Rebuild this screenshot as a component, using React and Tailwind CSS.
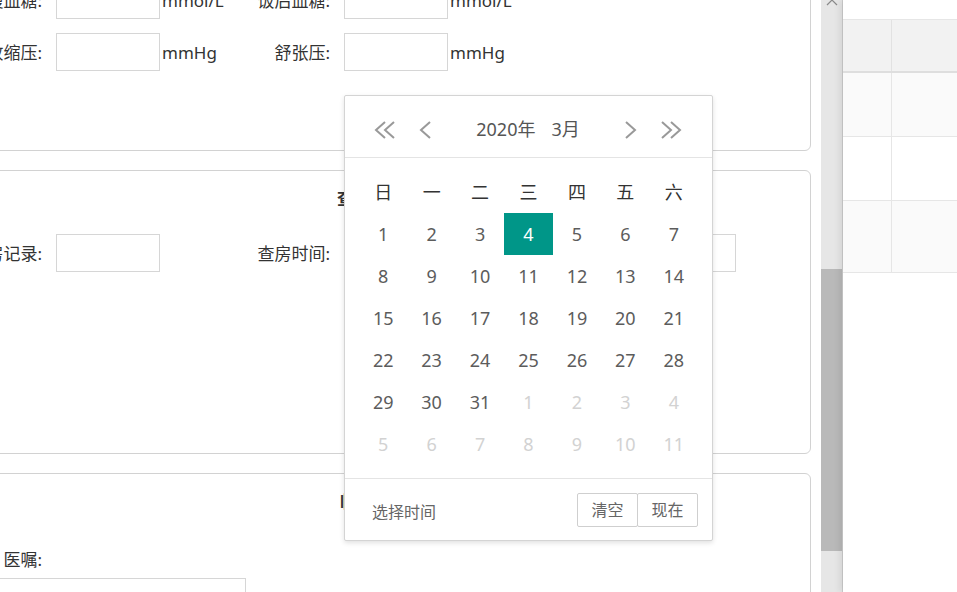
import React from 'react'

const font = { fontFamily: '"Noto Sans", "Noto Sans CJK SC", sans-serif' }

function Chevron({ dir = 'left', double = false }) {
  const w = double ? 22 : 12
  const pts = dir === 'left' ? ['11,1 2,9 11,17', '20,1 11,9 20,17'] : ['1,1 10,9 1,17', '10,1 19,9 10,17']
  const list = double ? pts : [dir === 'left' ? '11,1 2,9 11,17' : '1,1 10,9 1,17']
  return (
    <svg width={w} height="18" viewBox={`0 0 ${w} 18`} fill="none" stroke="#999" strokeWidth="2">
      {list.map(p => <polyline key={p} points={p} />)}
    </svg>
  )
}

function Field({ label, unit, wide }) {
  return (
    <div className="flex items-center">
      <label className="w-[145px] shrink-0 pr-[14px] pt-[2px] text-right text-[17px] text-[#333]">{label}</label>
      <div className={`h-[38px] shrink-0 border border-[#d6d6d6] bg-white ${wide ? 'w-[392px]' : 'w-[104px]'}`} />
      {unit && <span className="ml-[2px] pt-[2px] text-[17px] text-[#333]">{unit}</span>}
    </div>
  )
}

function Calendar() {
  const weeks = ['日', '一', '二', '三', '四', '五', '六']
  const days = []
  for (let i = 1; i <= 31; i++) days.push({ d: i, cur: true })
  for (let i = 1; i <= 11; i++) days.push({ d: i, cur: false })
  return (
    <div className="absolute left-[344px] top-[95px] w-[369px] rounded-[2px] border border-[#d4d4d4] bg-white shadow-[0_2px_5px_rgba(0,0,0,0.12)]" style={font}>
      <div className="flex h-[62px] items-center border-b border-[#e4e4e4] px-[29px] pt-[6px]">
        <div className="flex items-center gap-[23px]">
          <Chevron dir="left" double />
          <Chevron dir="left" />
        </div>
        <div className="flex flex-1 justify-center gap-[16px] text-[18px] text-[#555]">
          <span>2020年</span>
          <span>3月</span>
        </div>
        <div className="flex items-center gap-[24px]">
          <Chevron dir="right" />
          <Chevron dir="right" double />
        </div>
      </div>
      <div className="px-[14px] py-[13px]">
        <div className="grid grid-cols-7">
          {weeks.map(w => (
            <div key={w} className="flex h-[42px] items-center justify-center text-[18px] text-[#333]">{w}</div>
          ))}
          {days.map((x, i) => (
            <div
              key={i}
              className={`flex h-[42px] items-center justify-center text-[18px] ${
                x.cur && x.d === 4 ? 'bg-[#009688] text-white' : x.cur ? 'text-[#5c5c5c]' : 'text-[#d2d2d2]'
              }`}
            >
              {x.d}
            </div>
          ))}
        </div>
      </div>
      <div className="flex h-[62px] items-center border-t border-[#e4e4e4] pl-[27px] pr-[14px]">
        <span className="flex-1 pt-[4px] text-[16px] text-[#666]">选择时间</span>
        <button className="h-[34px] w-[61px] rounded-[2px] border border-[#cfcfcf] text-[16px] text-[#666]">清空</button>
        <button className="h-[34px] w-[61px] -ml-px rounded-[2px] border border-[#cfcfcf] text-[16px] text-[#666]">现在</button>
      </div>
    </div>
  )
}

export default function App() {
  return (
    <div className="relative flex h-[592px] w-[957px] overflow-hidden bg-white" style={font}>
      <div className="w-[821px] shrink-0 overflow-hidden">
        <div className="-ml-[90px] -mt-[100px] mr-[10px] flex flex-col gap-[19px]">
          <div className="h-[251px] rounded-[6px] border border-[#d2d2d2] pt-[80px]">
            <div className="grid grid-cols-[288px_288px_1fr] gap-y-[14px]">
              <Field label="空腹血糖:" unit="mmol/L" />
              <Field label="饭后血糖:" unit="mmol/L" />
              <div />
              <Field label="收缩压:" unit="mmHg" />
              <Field label="舒张压:" unit="mmHg" />
              <div />
            </div>
          </div>

          <div className="h-[284px] rounded-[6px] border border-[#d2d2d2] pt-[16px]">
            <div className="pl-[21px] text-center text-[17px] font-bold leading-[24px] text-[#333]">查房记录</div>
            <div className="mt-[23px] grid grid-cols-[288px_1fr]">
              <Field label="查房记录:" />
              <Field label="查房时间:" wide />
            </div>
          </div>

          <div className="h-[300px] rounded-[6px] border border-[#d2d2d2] pt-[16px]">
            <div className="pl-[27px] text-center text-[17px] font-bold leading-[24px] text-[#333]">临床医嘱</div>
            <div className="mt-[32px] w-[145px] pr-[14px] pt-[2px] text-right text-[17px] leading-[24px] text-[#333]">医嘱:</div>
            <div className="mt-[6px] h-[120px] w-[335px] border border-[#d6d6d6]" />
          </div>
        </div>
      </div>

      <div className="flex w-[22px] shrink-0 flex-col border-r border-[#cdcdcd] bg-[#e6e6e6]">
        <div className="flex h-[269px] justify-center">
          <svg width="12" height="8" viewBox="0 0 12 8" fill="none" stroke="#8a8a8a" strokeWidth="1.2" className="-mt-[2px]">
            <polyline points="1,7 6,2 11,7" />
          </svg>
        </div>
        <div className="h-[282px] bg-[#b9b9b9]" />
      </div>

      <div className="relative flex-1 pt-[19px] shadow-[-4px_0_6px_rgba(0,0,0,0.07)]">
        <div className="flex h-[52px] border-t border-[#e6e6e6] bg-[#f2f2f2]">
          <div className="w-[49px] border-r border-[#e2e2e2]" />
          <div className="flex-1" />
        </div>
        <div className="h-[2px] bg-[#dedede]" />
        <div className="flex h-[64px] border-b border-[#e6e6e6] bg-[#fafafa]">
          <div className="w-[49px] border-r border-[#e6e6e6]" />
        </div>
        <div className="flex h-[64px] border-b border-[#e6e6e6] bg-white">
          <div className="w-[49px] border-r border-[#e6e6e6]" />
        </div>
        <div className="flex h-[72px] border-b border-[#e6e6e6] bg-[#fafafa]">
          <div className="w-[49px] border-r border-[#e6e6e6]" />
        </div>
      </div>

      <Calendar />
    </div>
  )
}
